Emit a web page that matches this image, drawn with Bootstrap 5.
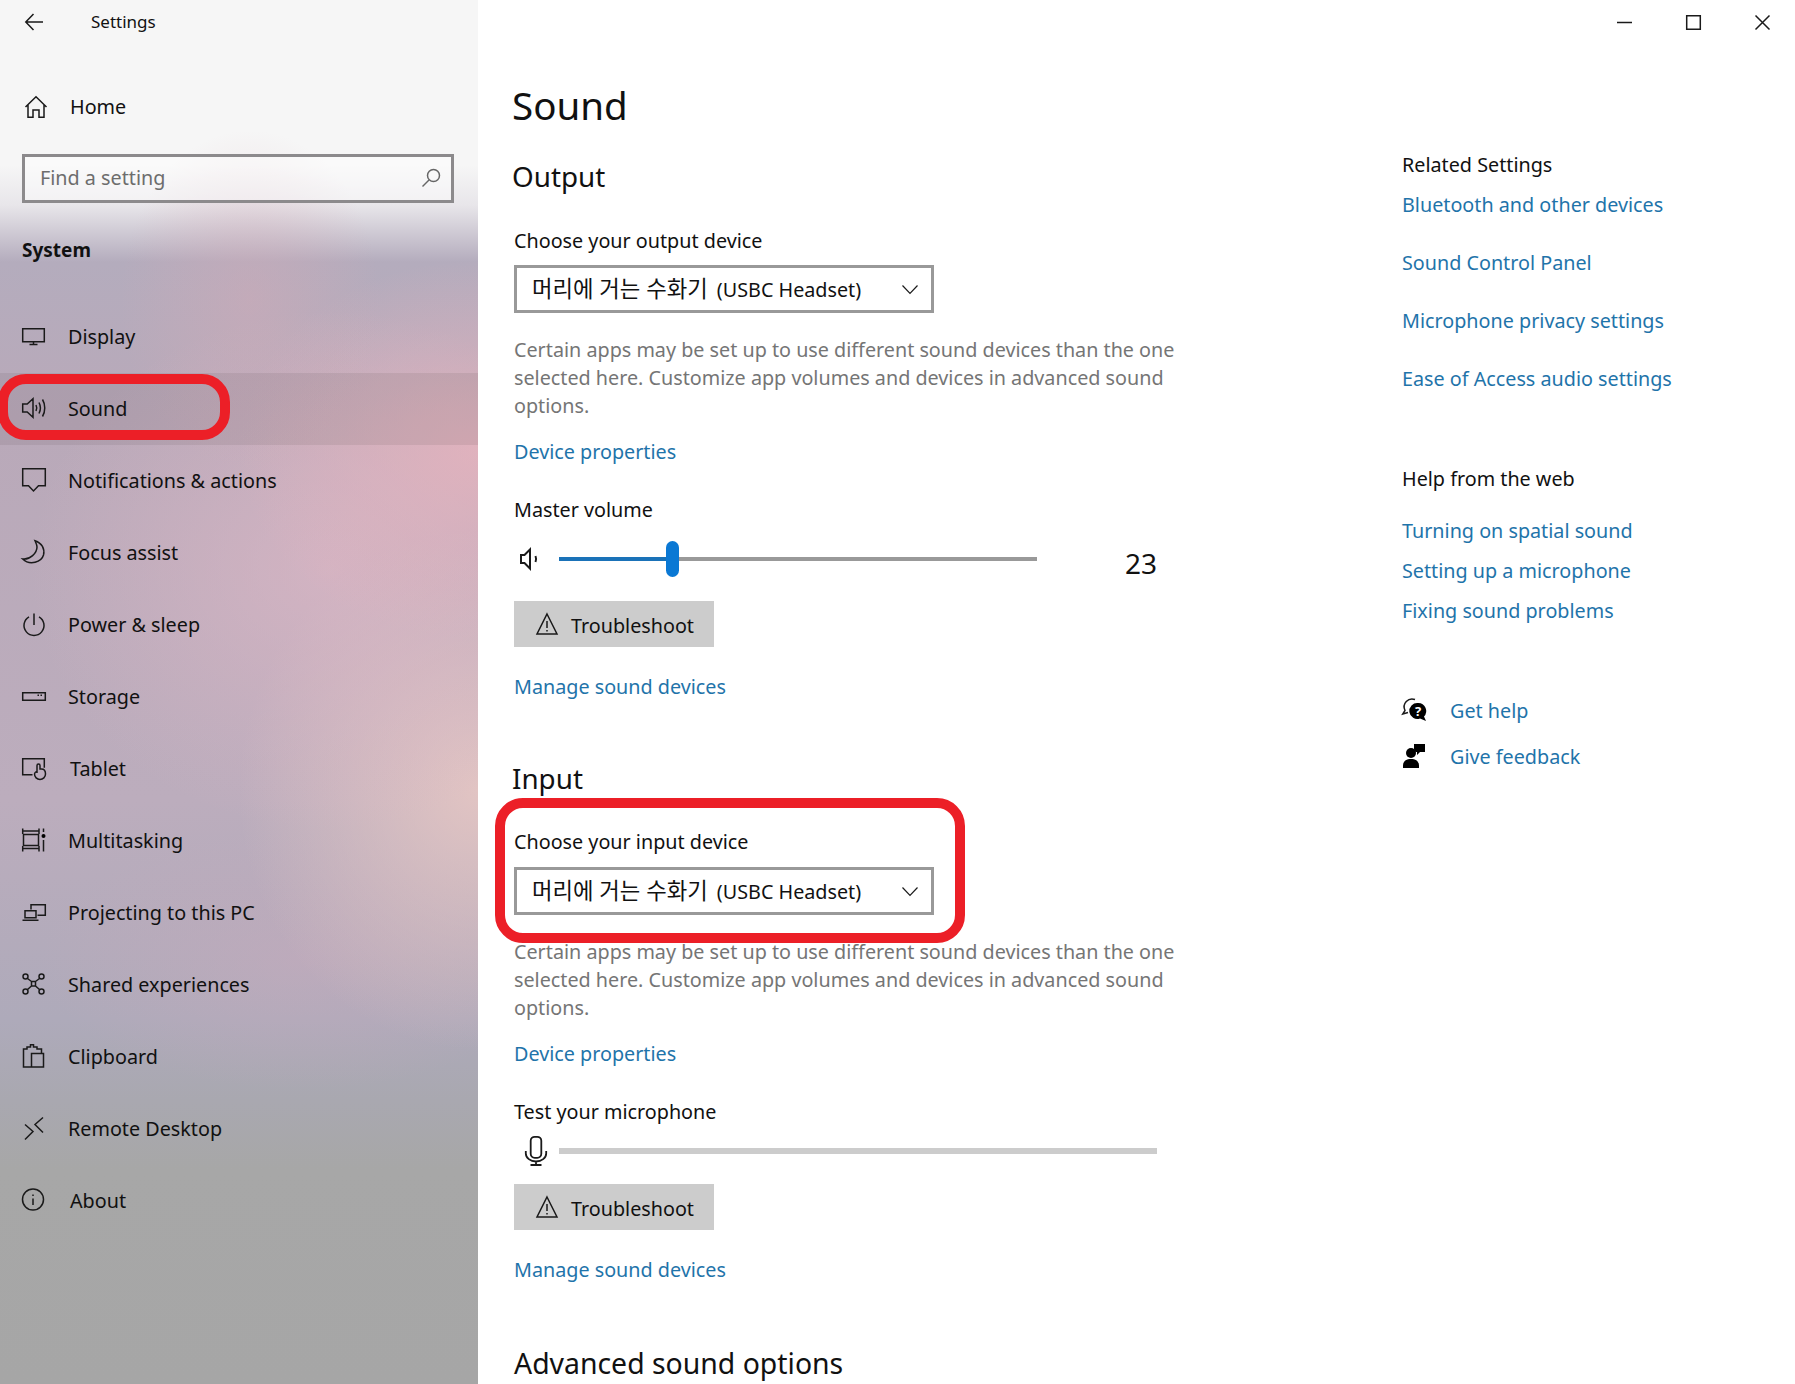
<!doctype html>
<html lang="en">
<head>
<meta charset="utf-8">
<title>Settings</title>
<link href="https://cdn.jsdelivr.net/npm/bootstrap@5.3.0/dist/css/bootstrap.min.css" rel="stylesheet">
<style>
html,body{height:1384px;overflow:hidden;background:#fff}
body{font-family:"Noto Sans","Noto Sans CJK KR",sans-serif;font-size:19.75px;line-height:28px;color:#111}
svg{display:block;flex:none;overflow:visible;fill:none;stroke:#1a1a1a;stroke-width:1.5}
.app-frame{height:1384px}
.side-pane{width:478px;flex:none;height:1384px;background:
 radial-gradient(ellipse 130px 170px at 250px 300px,rgba(212,170,182,.45),transparent),
 radial-gradient(ellipse 240px 190px at 478px 450px,rgba(234,180,190,.75),transparent),
 radial-gradient(ellipse 300px 260px at 330px 570px,rgba(224,184,198,.65),transparent),
 radial-gradient(ellipse 240px 260px at 478px 790px,rgba(232,200,196,.85),transparent),
 radial-gradient(ellipse 260px 130px at 300px 960px,rgba(200,170,188,.5),transparent),
 linear-gradient(180deg,#f6f6f6 0,#f6f6f6 165px,#e8e6ea 205px,#b4acbd 262px,#b9a9b9 420px,#bcadbd 800px,#aeaaba 1020px,#a9a8b0 1100px,#a7a7a7 1170px,#a6a6a6 100%)}
.top-strip{height:44px;padding-left:25px}
.title-text{font-size:17px;margin-left:48px;line-height:44px}
.home-link{margin-top:41px;padding-left:25px;height:44px}
.home-link span{margin-left:23px}
.find-box{margin:25px 24px 0 22px;height:49px;border:3px solid #8c8a8c;background:rgba(255,255,255,.45);padding:0 10px 2px 15px;color:#6d6d6d}
.sys-title{margin:33px 0 0 22px;font-weight:700;line-height:28px;font-size:19px}
.side-nav{margin-top:37px}
.side-link{height:72px;padding:0 0 0 22px;color:#111;position:relative}
.side-link:hover,.side-link:focus{color:#111}
.side-link svg{margin-top:-3px;margin-right:22px}
.side-link.shift-txt svg{margin-right:24px}
.side-link.is-current{background:rgba(70,60,60,.1)}
.red-ring{position:absolute;border:10px solid #ec1f27;border-radius:28px;pointer-events:none}
.ring-nav{left:-2px;top:1px;width:232px;height:66px}
.ring-input{left:-19px;top:-30px;width:470px;height:145px}
.center-pane{width:924px;flex:none;padding:80px 0 0 36px}
.aside-pane{flex:1 1 auto;min-width:0}
.page-title{font-size:38.5px;line-height:50px;margin:0 0 0 -2px;font-weight:400;color:#111}
.sec-title{font-size:27.8px;line-height:36px;margin:0 0 0 -2px;font-weight:400;color:#111}
.big-title{font-size:28.4px;line-height:40px;margin:0;font-weight:400;color:#111}
.line-text{margin:0;line-height:28px}
.hint-text{margin:0;line-height:28px;color:#757575;width:680px}
.blue-link{display:block;color:#1f74aa;text-decoration:none;line-height:28px}
.dev-picker{width:420px;height:48px;border:3px solid #999;background:#fff;padding:0 13px 0 15px;color:#111;font-size:19.75px;--bs-btn-hover-border-color:#999;--bs-btn-hover-bg:#fff}
.ko-text{font-size:22.3px;font-weight:400;margin-right:4px}
.fix-btn{width:200px;height:46px;background:#ccc;border:0;padding:3px 0 0 22px;color:#111;font-size:19.75px;gap:13px;--bs-btn-hover-bg:#ccc}
.fix-btn svg{margin-top:-3px}
.vol-row{height:36px;padding-left:6px}
.vol-track{width:478px;height:4px;background:#999;margin-left:19px;position:relative}
.vol-fill{height:4px;background:#1a72b8}
.vol-thumb{position:absolute;left:107px;top:-16px;width:13px;height:36px;border-radius:7px;background:#0a78d4}
.vol-num{font-size:28px;line-height:36px;margin-left:88px;margin-top:7px;color:#111}
.mic-row{height:30px;padding-left:11px}
.mic-meter{width:598px;height:6px;background:#ccc;border-radius:0;margin-left:12px;margin-top:0}
.win-btns{height:44px;padding-right:25px;gap:54px}
.sp10{margin-top:10px}.sp11{margin-top:11px}.sp12{margin-top:12px}.sp17{margin-top:17px}.sp18{margin-top:18px}
.sp23{margin-top:23px}.sp24{margin-top:24px}.sp26{margin-top:26px}.sp28{margin-top:28px}
.sp30{margin-top:30px}.sp32{margin-top:32px}.sp33{margin-top:33px}.sp59{margin-top:59px}
.sp72{margin-top:72px}.sp107{margin-top:107px}
.help-row{gap:24px}
.help-row svg{margin-top:-3px}
.solid-ico{fill:#000;stroke:none}
</style>
</head>
<body>
<div class="app-frame d-flex">
  <aside class="side-pane d-flex flex-column">
    <div class="top-strip d-flex align-items-center">
      <svg width="18" height="18" viewBox="0 0 18 18"><path d="M18 9H.8M8.500 1 .8 9l7.700 8"/></svg>
      <span class="title-text">Settings</span>
    </div>
    <div class="home-link d-flex align-items-center">
      <svg width="22" height="24" viewBox="0 0 22 24"><path d="M.5 12 11 1.700 21.500 12M3 9.500V22.300H8V15H14V22.300H19V9.500"/></svg>
      <span>Home</span>
    </div>
    <div class="find-box d-flex align-items-center justify-content-between">
      <span>Find a setting</span>
      <svg width="20" height="20" viewBox="0 0 20 20" style="stroke:#666"><circle cx="12.500" cy="7.500" r="6"/><path d="M8 12 1.500 18.500"/></svg>
    </div>
    <div class="sys-title">System</div>
    <nav class="side-nav nav flex-column">
      <a class="side-link nav-link d-flex align-items-center" href="#"><svg width="24" height="24" viewBox="0 0 24 24"><path d="M.7 4.700h21.600v13H.7zM11.500 17.700v2.800M7.500 20.500h8"/></svg>Display</a>
      <a class="side-link is-current nav-link d-flex align-items-center" href="#"><svg width="24" height="24" viewBox="0 0 24 24"><path d="M.7 8h4.500L11 2.800v18.400L5.200 16H.7zM14 9c1 2 1 4 0 6M17 6.500c1.800 3.500 1.800 7.500 0 11M20.500 3.500c3 5 3 12 0 17"/></svg>Sound<span class="red-ring ring-nav"></span></a>
      <a class="side-link nav-link d-flex align-items-center" href="#"><svg width="24" height="24" viewBox="0 0 24 24"><path d="M.7.700h22.600v17h-6.800L11.500 23l-5-5.300H.7z"/></svg>Notifications &amp; actions</a>
      <a class="side-link nav-link d-flex align-items-center" href="#"><svg width="24" height="24" viewBox="0 0 24 24"><path d="M13 .7C20 3 23 9 21.500 15 19.500 22 8 26 .7 19 8 20 15 13 15 7 15 5 14 3 13 .7z"/></svg>Focus assist</a>
      <a class="side-link nav-link d-flex align-items-center" href="#"><svg width="24" height="24" viewBox="0 0 24 24"><path d="M7 4.800A10 10 0 1 0 17 4.800M12 1.500V13"/></svg>Power &amp; sleep</a>
      <a class="side-link nav-link d-flex align-items-center" href="#"><svg width="24" height="24" viewBox="0 0 24 24"><path d="M.7 8.700h22.600v7.600H.7zM15.500 11.300h1.500M18.500 11.300H20"/></svg>Storage</a>
      <a class="side-link shift-txt nav-link d-flex align-items-center" href="#"><svg width="24" height="24" viewBox="0 0 24 24"><path d="M10.500 18.700H.7V2.700h21.600v9M15 17V9.500a1.500 1.500 0 0 1 3 0V13h1.500c2.500 0 4 2 4 5a5.500 5.500 0 0 1-11 0c0-1 1-2 2.500-3"/></svg>Tablet</a>
      <a class="side-link nav-link d-flex align-items-center" href="#"><svg width="24" height="24" viewBox="0 0 24 24"><path d="M.7.500V6M17 .5V6M.7 3H17M1.500 6.500h15v11h-15zM.7 18v5.500M17 18v5.500M.7 20.500H17M21.500.5V4M21.500 12V23.500"/><circle class="solid-ico" cx="21.500" cy="8" r="2"/></svg>Multitasking</a>
      <a class="side-link nav-link d-flex align-items-center" href="#"><svg width="24" height="24" viewBox="0 0 24 24"><path d="M9 9.500V4.700h14.300v10.600H15.500M3 10.700h11v7H3zM.5 20.300h16"/></svg>Projecting to this PC</a>
      <a class="side-link nav-link d-flex align-items-center" href="#"><svg width="24" height="24" viewBox="0 0 24 24"><circle cx="3.500" cy="4.500" r="2.500"/><circle cx="19.500" cy="4.500" r="2.500"/><circle cx="3.500" cy="19.500" r="2.500"/><circle cx="19.500" cy="19.500" r="2.500"/><path d="M9.500 9.500h4v4.500h-4zM5.500 6.500l4 3M17.500 6.500l-4 3M5.500 17.500l4-3.500M17.500 17.500l-4-3.500"/></svg>Shared experiences</a>
      <a class="side-link nav-link d-flex align-items-center" href="#"><svg width="24" height="24" viewBox="0 0 24 24"><path d="M9 23H1.500V5H5V3h3.500V.8h3V3H15v2h4.500v4.500M9.500 9.500H21.500V23H9.500z"/></svg>Clipboard</a>
      <a class="side-link nav-link d-flex align-items-center" href="#"><svg width="24" height="24" viewBox="0 0 24 24"><path d="M3 8.500 11 15.500 3 23.500M21 1.500 13 8.500 21 16.500"/></svg>Remote Desktop</a>
      <a class="side-link shift-txt nav-link d-flex align-items-center" href="#"><svg width="24" height="24" viewBox="0 0 24 24"><circle cx="11" cy="11.500" r="10.500"/><path d="M11 10.500V17M11 6.500v1.500"/></svg>About</a>
    </nav>
  </aside>

  <main class="center-pane">
    <h1 class="page-title">Sound</h1>
    <h2 class="sec-title sp28">Output</h2>
    <p class="line-text sp33">Choose your output device</p>
    <button class="dev-picker btn rounded-0 d-flex align-items-center justify-content-between sp10" type="button"><span><span class="ko-text">머리에 거는 수화기</span> (USBC Headset)</span><svg width="16" height="9" viewBox="0 0 16 9" style="stroke-width:1.200"><path d="M.5.500 8 8.300 15.500.5"/></svg></button>
    <p class="hint-text sp23">Certain apps may be set up to use different sound devices than the one selected here. Customize app volumes and devices in advanced sound options.</p>
    <a class="blue-link sp18" href="#">Device properties</a>
    <p class="line-text sp30">Master volume</p>
    <div class="vol-row d-flex align-items-center sp17">
      <svg width="20" height="22" viewBox="0 0 20 22" style="stroke-width:2"><path d="M1 7h3.500L10 1.500v19L4.500 15H1zM15.500 8c.8 2 .8 4 0 6"/></svg>
      <div class="vol-track"><div class="vol-fill" style="width:113px"></div><div class="vol-thumb"></div></div>
      <span class="vol-num">23</span>
    </div>
    <button class="fix-btn btn rounded-0 d-flex align-items-center sp24" type="button"><svg width="22" height="22" viewBox="0 0 22 22"><path d="M11 1 21 21H1zM11 8v7M11 17v1.500"/></svg>Troubleshoot</button>
    <a class="blue-link sp26" href="#">Manage sound devices</a>

    <h2 class="sec-title sp59">Input</h2>
    <div class="position-relative sp32">
      <p class="line-text">Choose your input device</p>
      <button class="dev-picker btn rounded-0 d-flex align-items-center justify-content-between sp11" type="button"><span><span class="ko-text">머리에 거는 수화기</span> (USBC Headset)</span><svg width="16" height="9" viewBox="0 0 16 9" style="stroke-width:1.200"><path d="M.5.500 8 8.300 15.500.5"/></svg></button>
      <span class="red-ring ring-input"></span>
    </div>
    <p class="hint-text sp23">Certain apps may be set up to use different sound devices than the one selected here. Customize app volumes and devices in advanced sound options.</p>
    <a class="blue-link sp18" href="#">Device properties</a>
    <p class="line-text sp30">Test your microphone</p>
    <div class="mic-row d-flex align-items-center sp10">
      <svg width="22" height="30" viewBox="0 0 22 30" style="stroke-width:1.800"><rect x="5.700" y=".8" width="10.600" height="21" rx="4"/><path d="M.8 15v2.500a10.200 8 0 0 0 20.400 0V15M11 25.500V29M5.500 29h11"/></svg>
      <div class="mic-meter progress"></div>
    </div>
    <button class="fix-btn btn rounded-0 d-flex align-items-center sp18" type="button"><svg width="22" height="22" viewBox="0 0 22 22"><path d="M11 1 21 21H1zM11 8v7M11 17v1.500"/></svg>Troubleshoot</button>
    <a class="blue-link sp26" href="#">Manage sound devices</a>
    <h2 class="big-title sp59">Advanced sound options</h2>
  </main>

  <section class="aside-pane">
    <div class="win-btns d-flex align-items-center justify-content-end">
      <svg width="15" height="15" viewBox="0 0 15 15"><path d="M0 7.500h15"/></svg>
      <svg width="15" height="15" viewBox="0 0 15 15"><path d="M.7.700h13.600v13.600H.7z"/></svg>
      <svg width="15" height="15" viewBox="0 0 15 15"><path d="M.5.500l14 14M14.500.5l-14 14"/></svg>
    </div>
    <p class="line-text sp107">Related Settings</p>
    <a class="blue-link sp12" href="#">Bluetooth and other devices</a>
    <a class="blue-link sp30" href="#">Sound Control Panel</a>
    <a class="blue-link sp30" href="#">Microphone privacy settings</a>
    <a class="blue-link sp30" href="#">Ease of Access audio settings</a>
    <p class="line-text sp72">Help from the web</p>
    <a class="blue-link sp24" href="#">Turning on spatial sound</a>
    <a class="blue-link sp12" href="#">Setting up a microphone</a>
    <a class="blue-link sp12" href="#">Fixing sound problems</a>
    <div class="help-row d-flex align-items-center sp72">
      <svg width="24" height="24" viewBox="0 0 24 24"><path d="M13 1.500A8 8 0 0 0 3 12.500L.8 16 6 14.500"/><path class="solid-ico" d="M16 5a8 8 0 0 1 6 13.500L24 23l-6-2.500A8 8 0 1 1 16 5z"/><text x="16" y="18" text-anchor="middle" font-size="13" font-weight="700" fill="#fff" stroke="none">?</text></svg>
      <a class="blue-link" href="#">Get help</a>
    </div>
    <div class="help-row d-flex align-items-center sp18">
      <svg width="24" height="24" viewBox="0 0 24 24"><circle class="solid-ico" cx="9" cy="9" r="5"/><path class="solid-ico" d="M1 24v-2.500c0-4 3-6.500 8-6.500s8 2.500 8 6.500V24zM12 0h11v8h-5l-3 3V8h-1.500L12 5.500z"/></svg>
      <a class="blue-link" href="#">Give feedback</a>
    </div>
  </section>
</div>
</body>
</html>
